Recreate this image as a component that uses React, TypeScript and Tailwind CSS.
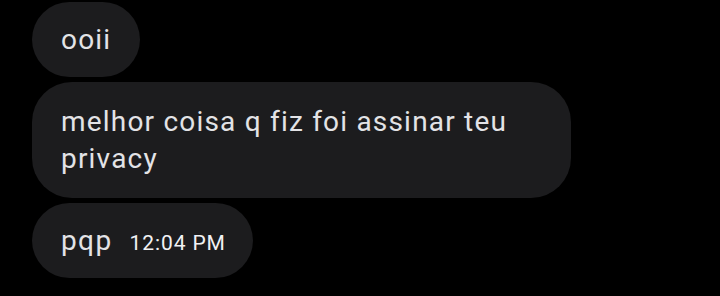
export default function App() {
  return (
    <div className="w-[720px] h-[296px] bg-black overflow-hidden pt-[2px] pl-[32px] flex flex-col items-start gap-[5px] font-['Roboto',sans-serif]">
      <div className="rounded-full bg-[#1c1c1e] px-[29px] py-[19px] text-[28px] leading-[37px] tracking-[1.2px] text-[#e3e3e6]">
        ooii
      </div>
      <div className="w-[539px] rounded-[40px] bg-[#1c1c1e] pl-[29px] pr-[20px] py-[21px] text-[28px] leading-[37px] tracking-[1.2px] text-[#e3e3e6]">
        melhor coisa q fiz foi assinar teu privacy
      </div>
      <div className="w-[221px] rounded-full bg-[#1c1c1e] pl-[29px] py-[19px] flex items-baseline gap-[17px] text-[#e3e3e6]">
        <span className="text-[28px] leading-[37px] tracking-[1.4px]">pqp</span>
        <span className="text-[21px] leading-[24px] tracking-[0.9px] text-[#f1f1f4]">12:04 PM</span>
      </div>
    </div>
  )
}
